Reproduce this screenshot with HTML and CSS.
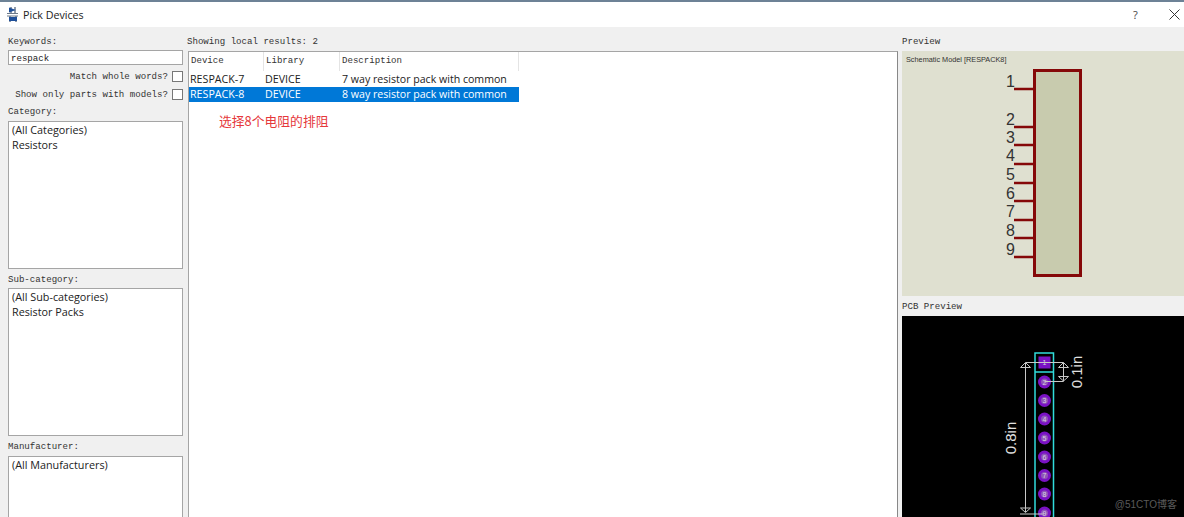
FILE: index.html
```html
<!DOCTYPE html>
<html lang="en">
<head>
    <meta charset="UTF-8">
    <meta name="viewport" content="width=device-width, initial-scale=1.0">
    <title>Pick Devices</title>
    <link rel="stylesheet" href="styles.css">
</head>
<body>
    <div class="title-bar">
        <svg class="app-icon" width="12" height="15" viewBox="0 0 12 15">
            <path d="M4 0v6M8 0v6M3 9v6M9 9v6" stroke="#56677c" stroke-width="1.3"/>
            <path d="M0 6.5h11M0 9h11" stroke="#6d7a8a" stroke-width="1"/>
            <path d="M2 .5l7 2.5-7 2.500z" fill="#1e4f9a"/>
            <rect x="2" y="10" width="8" height="4" fill="#1e4f9a"/>
        </svg>
        <span class="title-text">Pick Devices</span>
        <span class="title-help">?</span>
        <svg class="title-close" width="11" height="11" viewBox="0 0 11 11">
            <path d="M.5.5l10 10M10.5.5l-10 10" stroke="#333" stroke-width="1"/>
        </svg>
    </div>

    <div class="dialog">
        <div class="filter-col">
            <div class="label">Keywords:</div>
            <div class="keyword-input">respack</div>
            <div class="check-row">Match whole words?<span class="checkbox"></span></div>
            <div class="check-row">Show only parts with models?<span class="checkbox"></span></div>
            <div class="label label-category">Category:</div>
            <div class="list-box">
                <div>(All Categories)</div>
                <div>Resistors</div>
            </div>
            <div class="label label-sub">Sub-category:</div>
            <div class="list-box">
                <div>(All Sub-categories)</div>
                <div>Resistor Packs</div>
            </div>
            <div class="label label-sub">Manufacturer:</div>
            <div class="list-box list-open">
                <div>(All Manufacturers)</div>
            </div>
        </div>

        <div class="results-col">
            <div class="label results-label">Showing local results: 2</div>
            <div class="results-box">
                <div class="result-row result-head">
                    <div class="col-device">Device</div>
                    <div class="col-library">Library</div>
                    <div class="col-desc">Description</div>
                </div>
                <div class="result-row">
                    <div class="col-device">RESPACK-7</div>
                    <div class="col-library">DEVICE</div>
                    <div class="col-desc">7 way resistor pack with common</div>
                </div>
                <div class="result-row selected">
                    <div class="col-device">RESPACK-8</div>
                    <div class="col-library">DEVICE</div>
                    <div class="col-desc">8 way resistor pack with common</div>
                </div>
                <div class="annotation">选择8个电阻的排阻</div>
            </div>
        </div>

        <div class="preview-col">
            <div class="label">Preview</div>
            <svg class="schematic" width="282" height="245" viewBox="902 51 282 245">
                <text x="906" y="61.5" class="model-name">Schematic Model [RESPACK8]</text>
                <rect x="1034.5" y="70.5" width="46" height="205" fill="#c8cbae" stroke="#850808" stroke-width="3"/>
                <path d="M1014 89h20M1014 127h20M1014 145h20M1014 164h20M1014 183h20M1014 201h20M1014 220h20M1014 238h20M1014 257h20" stroke="#850808" stroke-width="2.4"/>
                <g class="pin-num">
                    <text x="1015" y="86.5">1</text>
                    <text x="1015" y="124.5">2</text>
                    <text x="1015" y="143">3</text>
                    <text x="1015" y="161">4</text>
                    <text x="1015" y="180">5</text>
                    <text x="1015" y="198.5">6</text>
                    <text x="1015" y="217">7</text>
                    <text x="1015" y="235.5">8</text>
                    <text x="1015" y="254.5">9</text>
                </g>
            </svg>
            <div class="label label-pcb">PCB Preview</div>
            <div class="pcb-preview">
                <svg class="pcb" width="282" height="201" viewBox="902 316 282 201">
                    <path d="M1035 517V353h18.5V517M1035 372h18.5" fill="none" stroke="#30dcdc" stroke-width="1.5"/>
                    <rect x="1038.5" y="356.5" width="12" height="12" fill="#7a12c4"/>
                    <g fill="#7a12c4">
                        <circle cx="1044.5" cy="382" r="6.5"/>
                        <circle cx="1044.5" cy="400.5" r="6.5"/>
                        <circle cx="1044.5" cy="419" r="6.5"/>
                        <circle cx="1044.5" cy="438" r="6.5"/>
                        <circle cx="1044.5" cy="457" r="6.5"/>
                        <circle cx="1044.5" cy="475.5" r="6.5"/>
                        <circle cx="1044.5" cy="494" r="6.5"/>
                        <circle cx="1044.5" cy="513" r="6.5"/>
                    </g>
                    <g fill="#8f55b8">
                        <circle cx="1044.5" cy="382" r="3.5"/>
                        <circle cx="1044.5" cy="400.5" r="3.5"/>
                        <circle cx="1044.5" cy="419" r="3.5"/>
                        <circle cx="1044.5" cy="438" r="3.5"/>
                        <circle cx="1044.5" cy="457" r="3.5"/>
                        <circle cx="1044.5" cy="475.5" r="3.5"/>
                        <circle cx="1044.5" cy="494" r="3.5"/>
                        <circle cx="1044.5" cy="513" r="3.5"/>
                    </g>
                    <g class="pad-num">
                        <text x="1044.5" y="365">1</text>
                        <text x="1044.5" y="384.5">2</text>
                        <text x="1044.5" y="403">3</text>
                        <text x="1044.5" y="421.5">4</text>
                        <text x="1044.5" y="440.5">5</text>
                        <text x="1044.5" y="459.5">6</text>
                        <text x="1044.5" y="478">7</text>
                        <text x="1044.5" y="496.5">8</text>
                        <text x="1044.5" y="515.5">9</text>
                    </g>
                    <g fill="none" stroke="#c8c8c8" stroke-width="1">
                        <path d="M1025.5 362.5h38M1025.5 363v149M1044 514h-24M1063.5 363v18M1044.5 381.5h19"/>
                        <path d="M1020.5 367.5l5-5 5 5zM1020.5 508l5 4.5 5-4.5zM1058.5 367.5l5-5 5 5zM1058.5 376.5l5 4.5 5-4.5z"/>
                    </g>
                    <text class="dim-text" transform="translate(1082 372) rotate(-90)">0.1in</text>
                    <text class="dim-text" transform="translate(1016 438) rotate(-90)">0.8in</text>
                </svg>
                <span class="watermark">@51CTO博客</span>
            </div>
        </div>
    </div>
</body>
</html>
```

FILE: styles.css
```css
html, body {
    height: 517px;
    overflow: hidden;
}
body {
    margin: 0;
    background-color: #f0f0f0;
    font-family: "Open Sans", "Noto Sans", sans-serif;
    color: #222;
}
.title-bar {
    display: flex;
    align-items: center;
    height: 25px;
    padding-left: 7px;
    background-color: #fff;
    border-top: 2px solid #6d8296;
}
.app-icon {
    margin-right: 4px;
}
.title-text {
    flex: 1;
    font-size: 10.7px;
}
.title-help {
    width: 36px;
    font-size: 11px;
    color: #444;
}
.title-close {
    margin-right: 4px;
}
.dialog {
    display: flex;
    height: 490px;
}
.label {
    font-family: "Liberation Mono", monospace;
    font-size: 9.1px;
    line-height: 11px;
    color: #333;
}
.filter-col {
    display: flex;
    flex-direction: column;
    width: 175px;
    margin-left: 8px;
    padding-top: 9px;
}
.keyword-input {
    box-sizing: border-box;
    height: 15px;
    margin-top: 3px;
    padding-left: 2px;
    background-color: #fff;
    border: 1px solid #a5a5a5;
    font-family: "Liberation Mono", monospace;
    font-size: 9.1px;
    line-height: 15px;
}
.check-row {
    display: flex;
    justify-content: flex-end;
    align-items: center;
    gap: 4px;
    height: 12px;
    margin-top: 5px;
    font-family: "Liberation Mono", monospace;
    font-size: 9.1px;
    color: #333;
}
.check-row + .check-row {
    margin-top: 6px;
}
.checkbox {
    box-sizing: border-box;
    width: 11px;
    height: 11px;
    background-color: #fff;
    border: 1px solid #777;
}
.label-category {
    margin-top: 6px;
}
.label-sub {
    margin-top: 5px;
}
.list-box {
    box-sizing: border-box;
    height: 148px;
    margin-top: 4px;
    padding: 0 3px;
    background-color: #fff;
    border: 1px solid #a5a5a5;
    font-size: 10.8px;
    line-height: 15px;
}
.label-sub + .list-box {
    margin-top: 3px;
}
.label-sub + .list-open {
    flex: 1;
    height: auto;
    margin-top: 4px;
    margin-bottom: -10px;
}
.results-col {
    display: flex;
    flex-direction: column;
    width: 710px;
    margin-left: 5px;
    padding-top: 9px;
}
.results-label {
    margin-left: -1px;
}
.results-box {
    flex: 1;
    margin-top: 4px;
    margin-bottom: -10px;
    background-color: #fff;
    border: 1px solid #a5a5a5;
    border-right-color: #888;
}
.result-row {
    display: flex;
    width: 330px;
    height: 15px;
    font-size: 10.7px;
    line-height: 14px;
}
.result-row > div {
    box-sizing: border-box;
    padding-left: 1px;
}
.col-device {
    width: 75px;
}
.col-library {
    width: 76px;
}
.result-row > .col-desc {
    flex: 1;
    padding-left: 2px;
    font-size: 10.6px;
}
.result-row.result-head {
    height: 19px;
    margin-bottom: 1px;
    line-height: 18px;
    color: #333;
}
.result-row.result-head > div {
    padding-left: 2px;
    font-family: "Liberation Mono", monospace;
    font-size: 9.1px;
    border-right: 1px solid #e4e4e4;
}
.selected {
    background-color: #0078d7;
    color: #fff;
}
.annotation {
    margin: 10px 0 0 30px;
    font-family: "Noto Sans CJK SC", sans-serif;
    font-size: 12.8px;
    line-height: 17px;
    color: #e5383b;
}
.preview-col {
    display: flex;
    flex-direction: column;
    width: 282px;
    margin-left: 4px;
    padding-top: 9px;
}
.schematic {
    display: block;
    flex-shrink: 0;
    margin-top: 4px;
    background-color: #dfe0d0;
}
.model-name {
    font-family: "Liberation Sans", sans-serif;
    font-size: 7.3px;
    fill: #333;
}
.pin-num text {
    font-family: "Liberation Sans", sans-serif;
    font-size: 16px;
    text-anchor: end;
    fill: #333;
}
.label-pcb {
    margin-top: 5px;
    margin-bottom: 4px;
}
.pcb-preview {
    position: relative;
    flex: 1;
    background-color: #000;
}
.pcb {
    display: block;
}
.pad-num text {
    font-family: "Liberation Sans", sans-serif;
    font-size: 7px;
    text-anchor: middle;
    fill: #d8d0e0;
}
.dim-text {
    font-family: "Liberation Sans", sans-serif;
    font-size: 15px;
    text-anchor: middle;
    fill: #e0e0e0;
}
.watermark {
    position: absolute;
    right: 7px;
    bottom: 6px;
    font-family: "Liberation Sans", "Noto Sans CJK SC", sans-serif;
    font-size: 10px;
    color: #5a5a5a;
}
```
